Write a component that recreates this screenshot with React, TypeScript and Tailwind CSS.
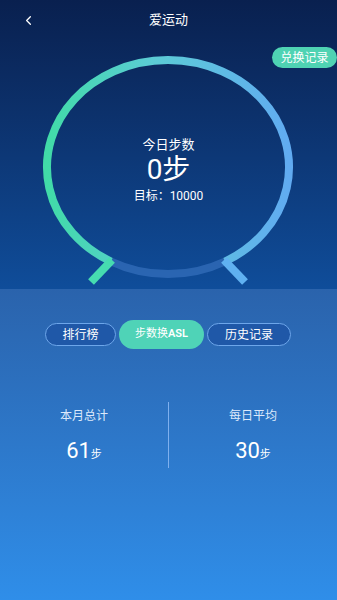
import { ChevronLeft } from 'lucide-react'

const font = { fontFamily: 'Roboto, "Noto Sans CJK SC", "Noto Sans", sans-serif' }

// ring drawn in svg coords (top of ring area = page y 40)
function StepRing() {
  return (
    <svg width="337" height="249" viewBox="0 0 337 249" className="block">
      <defs>
        <linearGradient id="ringGrad" x1="0" y1="0" x2="1" y2="0">
          <stop offset="0" stopColor="#41dba8" />
          <stop offset="0.45" stopColor="#5ccbd6" />
          <stop offset="1" stopColor="#61abf1" />
        </linearGradient>
      </defs>
      {/* remaining part */}
      <path d="M 225 221.5 A 121 107 0 0 1 111 221.5" fill="none" stroke="#3670bd" strokeOpacity="0.7" strokeWidth="8" />
      {/* progress part */}
      <path d="M 111 221.5 A 121 107 0 1 1 225 221.5" fill="none" stroke="url(#ringGrad)" strokeWidth="8" />
      <line x1="112" y1="220" x2="91" y2="242" stroke="#46dcb0" strokeWidth="8" />
      <line x1="224" y1="220" x2="245" y2="242" stroke="#60b1f1" strokeWidth="8" />
    </svg>
  )
}

export default function App() {
  return (
    <div className="flex h-[600px] w-[337px] flex-col overflow-hidden text-white" style={font}>
      {/* top */}
      <div className="relative h-[289px] bg-gradient-to-b from-[#09204f] to-[#0f4d9a]">
        <div className="relative flex h-10 items-center justify-center">
          <ChevronLeft className="absolute left-[21px] top-[13px] h-[15px] w-[15px]" strokeWidth={2} />
          <span className="text-[13px]">爱运动</span>
        </div>
        <div className="absolute right-0 top-[47px] flex h-[21px] w-[65px] items-center justify-center rounded-full bg-[#4fd3b3] text-[12px] text-white">
          兑换记录
        </div>
        <div className="relative">
          <StepRing />
          <div className="absolute left-0 right-0 top-[96px] flex flex-col items-center">
            <span className="text-[13px] leading-[17px]">今日步数</span>
            <span className="mt-[3px] flex h-[28px] items-center text-[28px] leading-none">0步</span>
            <span className="mt-[4px] text-[12px] leading-[16px]">目标：10000</span>
          </div>
        </div>
      </div>

      {/* bottom */}
      <div className="flex flex-1 flex-col bg-gradient-to-b from-[#2a63ac] to-[#2f8ee9]">
        <div className="mt-[31px] flex items-center justify-center gap-[3px] pr-[1px]">
          <div className="flex h-[23px] w-[71px] items-center justify-center rounded-full border border-[#6da6ea] bg-[#1f58a8] text-[12px]">
            排行榜
          </div>
          <div className="flex h-[29px] w-[85px] items-center justify-center rounded-full bg-[#4fd3b7] text-[11px]">
            步数换<span className="font-semibold">ASL</span>
          </div>
          <div className="flex h-[23px] w-[84px] items-center justify-center rounded-full border border-[#6da6ea] bg-[#1f58a8] text-[12px]">
            历史记录
          </div>
        </div>

        <div className="mt-[53px] flex h-[66px] items-stretch">
          <div className="flex flex-1 flex-col items-center pt-[6px]">
            <span className="text-[12px] leading-[16px] text-[#dce9fb]">本月总计</span>
            <span className="mt-[13px] text-[22px] leading-[27px]">
              61<span className="text-[11px]">步</span>
            </span>
          </div>
          <div className="w-px bg-[#7fb0ee]" />
          <div className="flex flex-1 flex-col items-center pt-[6px]">
            <span className="text-[12px] leading-[16px] text-[#dce9fb]">每日平均</span>
            <span className="mt-[13px] text-[22px] leading-[27px]">
              30<span className="text-[11px]">步</span>
            </span>
          </div>
        </div>
      </div>
    </div>
  )
}
